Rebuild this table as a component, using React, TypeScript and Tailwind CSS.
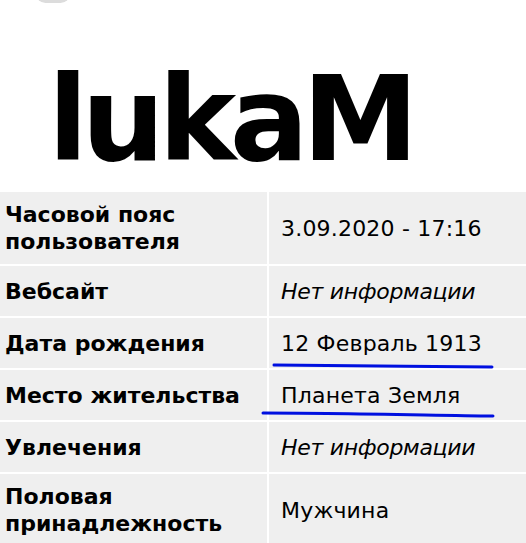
const rows: { label: string[]; value: string; italic?: boolean; line?: 'a' | 'b' }[] = [
  { label: ['Часовой пояс', 'пользователя'], value: '3.09.2020 - 17:16' },
  { label: ['Вебсайт'], value: 'Нет информации', italic: true },
  { label: ['Дата рождения'], value: '12 Февраль 1913', line: 'a' },
  { label: ['Место жительства'], value: 'Планета Земля', line: 'b' },
  { label: ['Увлечения'], value: 'Нет информации', italic: true },
  { label: ['Половая', 'принадлежность'], value: 'Мужчина' },
]

export default function App() {
  return (
    <div className="min-h-screen w-[526px] overflow-hidden bg-white font-['DejaVu_Sans',sans-serif] text-black">
      {/* Header */}
      <div className="relative h-[192px]">
        <div className="absolute left-[36px] top-[-16px] h-[19px] w-[34px] rounded-full bg-[#dcdcdc]" />
        <div className="pl-[48px] pt-[50px] text-[117px] leading-[140px] font-bold tracking-[-6.5px]">lukaM</div>
      </div>

      {/* Info table */}
      <div className="grid grid-cols-[267px_1fr] gap-[2px] bg-white">
        {rows.map((r, i) => (
          <div key={i} className="contents">
            <div className={`flex items-center bg-[#efefef] pl-[5px] text-[22px] leading-[27px] font-bold ${r.label.length > 1 ? 'min-h-[72px]' : 'h-[50px]'}`}>
              <div>
                {r.label.map((l) => (
                  <div key={l}>{l}</div>
                ))}
              </div>
            </div>
            <div className="relative flex items-center bg-[#efefef] pl-[12px] text-[22px] leading-[27px]">
              <span className={r.italic ? 'italic tracking-[-0.3px]' : 'tracking-[0.2px]'}>{r.value}</span>
              {r.line === 'a' && (
                <svg className="absolute left-[3px] top-[45px]" width="222" height="6" viewBox="0 0 222 6">
                  <path d="M2 2 C60 3 150 3 220 4" stroke="#0010e0" strokeWidth="3" fill="none" strokeLinecap="round" />
                </svg>
              )}
              {r.line === 'b' && (
                <svg className="absolute left-[-8px] top-[41px]" width="234" height="8" viewBox="0 0 234 8">
                  <path d="M2 2 C70 2 160 4 232 5" stroke="#0010e0" strokeWidth="3" fill="none" strokeLinecap="round" />
                </svg>
              )}
            </div>
          </div>
        ))}
      </div>
    </div>
  )
}
